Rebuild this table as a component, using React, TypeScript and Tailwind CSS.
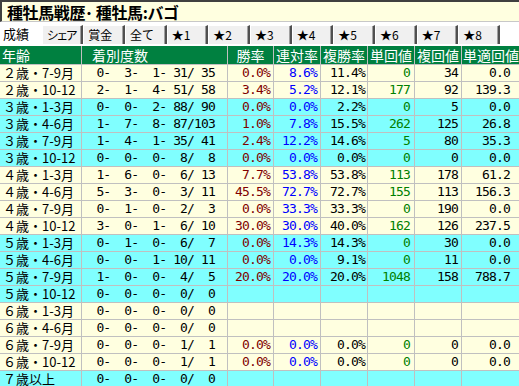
import React from 'react';

type Row = {
  age: string;
  rec: number[];
  win?: string;
  ren?: string;
  fuku?: string;
  tan?: string;
  fk?: string;
  teki?: string;
  cyan: boolean;
};

const rows: Row[] = [
  { age: '２歳・7-9月', rec: [0, 3, 1, 31, 35], win: '0.0%', ren: '8.6%', fuku: '11.4%', tan: '0', fk: '34', teki: '0.0', cyan: false },
  { age: '２歳・10-12', rec: [2, 1, 4, 51, 58], win: '3.4%', ren: '5.2%', fuku: '12.1%', tan: '177', fk: '92', teki: '139.3', cyan: false },
  { age: '３歳・1-3月', rec: [0, 0, 2, 88, 90], win: '0.0%', ren: '0.0%', fuku: '2.2%', tan: '0', fk: '5', teki: '0.0', cyan: true },
  { age: '３歳・4-6月', rec: [1, 7, 8, 87, 103], win: '1.0%', ren: '7.8%', fuku: '15.5%', tan: '262', fk: '125', teki: '26.8', cyan: true },
  { age: '３歳・7-9月', rec: [1, 4, 1, 35, 41], win: '2.4%', ren: '12.2%', fuku: '14.6%', tan: '5', fk: '80', teki: '35.3', cyan: true },
  { age: '３歳・10-12', rec: [0, 0, 0, 8, 8], win: '0.0%', ren: '0.0%', fuku: '0.0%', tan: '0', fk: '0', teki: '0.0', cyan: true },
  { age: '４歳・1-3月', rec: [1, 6, 0, 6, 13], win: '7.7%', ren: '53.8%', fuku: '53.8%', tan: '113', fk: '178', teki: '61.2', cyan: false },
  { age: '４歳・4-6月', rec: [5, 3, 0, 3, 11], win: '45.5%', ren: '72.7%', fuku: '72.7%', tan: '155', fk: '113', teki: '156.3', cyan: false },
  { age: '４歳・7-9月', rec: [0, 1, 0, 2, 3], win: '0.0%', ren: '33.3%', fuku: '33.3%', tan: '0', fk: '190', teki: '0.0', cyan: false },
  { age: '４歳・10-12', rec: [3, 0, 1, 6, 10], win: '30.0%', ren: '30.0%', fuku: '40.0%', tan: '162', fk: '126', teki: '237.5', cyan: false },
  { age: '５歳・1-3月', rec: [0, 1, 0, 6, 7], win: '0.0%', ren: '14.3%', fuku: '14.3%', tan: '0', fk: '30', teki: '0.0', cyan: true },
  { age: '５歳・4-6月', rec: [0, 0, 1, 10, 11], win: '0.0%', ren: '0.0%', fuku: '9.1%', tan: '0', fk: '11', teki: '0.0', cyan: true },
  { age: '５歳・7-9月', rec: [1, 0, 0, 4, 5], win: '20.0%', ren: '20.0%', fuku: '20.0%', tan: '1048', fk: '158', teki: '788.7', cyan: true },
  { age: '５歳・10-12', rec: [0, 0, 0, 0, 0], cyan: true },
  { age: '６歳・1-3月', rec: [0, 0, 0, 0, 0], cyan: false },
  { age: '６歳・4-6月', rec: [0, 0, 0, 0, 0], cyan: false },
  { age: '６歳・7-9月', rec: [0, 0, 0, 1, 1], win: '0.0%', ren: '0.0%', fuku: '0.0%', tan: '0', fk: '0', teki: '0.0', cyan: false },
  { age: '６歳・10-12', rec: [0, 0, 0, 1, 1], win: '0.0%', ren: '0.0%', fuku: '0.0%', tan: '0', fk: '0', teki: '0.0', cyan: false },
  { age: '７歳以上', rec: [0, 0, 0, 0, 0], cyan: true },
];

const tabs = ['成績', 'シェア', '賞金', '全て', '★1', '★2', '★3', '★4', '★5', '★6', '★7', '★8'];

const pad = (n: number) => String(n).padStart(3, ' ');
// " 0-  3-  1- 31/ 35" style, right aligned
const fmtRec = (r: number[]) => `${pad(r[0])}-${pad(r[1])}-${pad(r[2])}-${pad(r[3])}/${pad(r[4])}`;

const num = "font-['DejaVu_Sans_Mono','Noto_Sans_CJK_JP',monospace] text-[13px] tracking-[-0.85px] whitespace-pre text-right";

export default function App() {
  return (
    <div className="w-[519px] h-[386px] overflow-hidden bg-white font-['Noto_Sans_CJK_JP',sans-serif] text-black">
      {/* title */}
      <div className="h-[22px] w-[530px] bg-[#ffffe0] border-t-2 border-l-2 border-b border-t-[#404040] border-l-[#404040] border-b-[#c8c8c8] pl-[5px] flex items-center">
        <span className="text-[16px] font-bold leading-[18px] tracking-[-0.4px] whitespace-nowrap">種牡馬戦歴･ 種牡馬:バゴ</span>
      </div>

      {/* tabs */}
      <div className="mt-[3px] grid grid-cols-12 w-[500px] h-[19px]">
        {tabs.map((t, i) =>
          i === 0 ? (
            <div key={t} className="bg-white pl-[3px] text-[13px] leading-[15px] flex items-center -mt-[2px]">
              {t}
            </div>
          ) : (
            <div
              key={t}
              className={`bg-[#f0f0f0] border-t border-l border-r-2 border-t-white border-l-white border-r-[#505050] shadow-[inset_-1px_0_0_#a0a0a0] pl-[4px] text-[12px] leading-[14px] flex items-center whitespace-nowrap ${t === 'シェア' ? 'tracking-[-2.5px]' : ''}`}
            >
              {t}
            </div>
          )
        )}
      </div>

      {/* table */}
      <div className="mt-[2px] w-[540px]">
        <div className="flex h-[19px] bg-[#008040] text-white text-[14px] leading-[18px] border-b border-[#c0c0c0]">
          <div className="w-[82px] border-r border-[#c0c0c0] pl-[2px]">年齢</div>
          <div className="w-[146px] border-r border-[#c0c0c0] pl-[10px]">着別度数</div>
          <div className="w-[46px] border-r border-[#c0c0c0] text-center">勝率</div>
          <div className="w-[47px] border-r border-[#c0c0c0] text-center">連対率</div>
          <div className="w-[47px] border-r border-[#c0c0c0] text-center">複勝率</div>
          <div className="w-[47px] border-r border-[#c0c0c0] text-center">単回値</div>
          <div className="w-[47px] border-r border-[#c0c0c0] text-center">複回値</div>
          <div className="w-[60px] pl-[1px] whitespace-nowrap">単適回値</div>
        </div>

        {rows.map((r) => (
          <div
            key={r.age}
            className={`flex h-[17px] border-b border-[#c0c0c0] leading-[16px] ${r.cyan ? 'bg-[#80ffff]' : 'bg-[#ffffe0]'}`}
          >
            <div className="w-[82px] border-r border-[#c0c0c0] pl-[3px] text-[13px] leading-[16px] whitespace-nowrap">{r.age}</div>
            <div className={`w-[146px] border-r border-[#c0c0c0] pr-[12px] ${num}`}>{fmtRec(r.rec)}</div>
            <div className={`w-[46px] border-r border-[#c0c0c0] pr-[3px] text-[#800000] ${num}`}>{r.win}</div>
            <div className={`w-[47px] border-r border-[#c0c0c0] pr-[3px] text-[#0000ff] ${num}`}>{r.ren}</div>
            <div className={`w-[47px] border-r border-[#c0c0c0] pr-[2px] ${num}`}>{r.fuku}</div>
            <div className={`w-[47px] border-r border-[#c0c0c0] pr-[4px] text-[#008000] ${num}`}>{r.tan}</div>
            <div className={`w-[47px] border-r border-[#c0c0c0] pr-[3px] ${num}`}>{r.fk}</div>
            <div className={`w-[57px] pr-[9px] ${num}`}>{r.teki}</div>
          </div>
        ))}
      </div>
    </div>
  );
}
